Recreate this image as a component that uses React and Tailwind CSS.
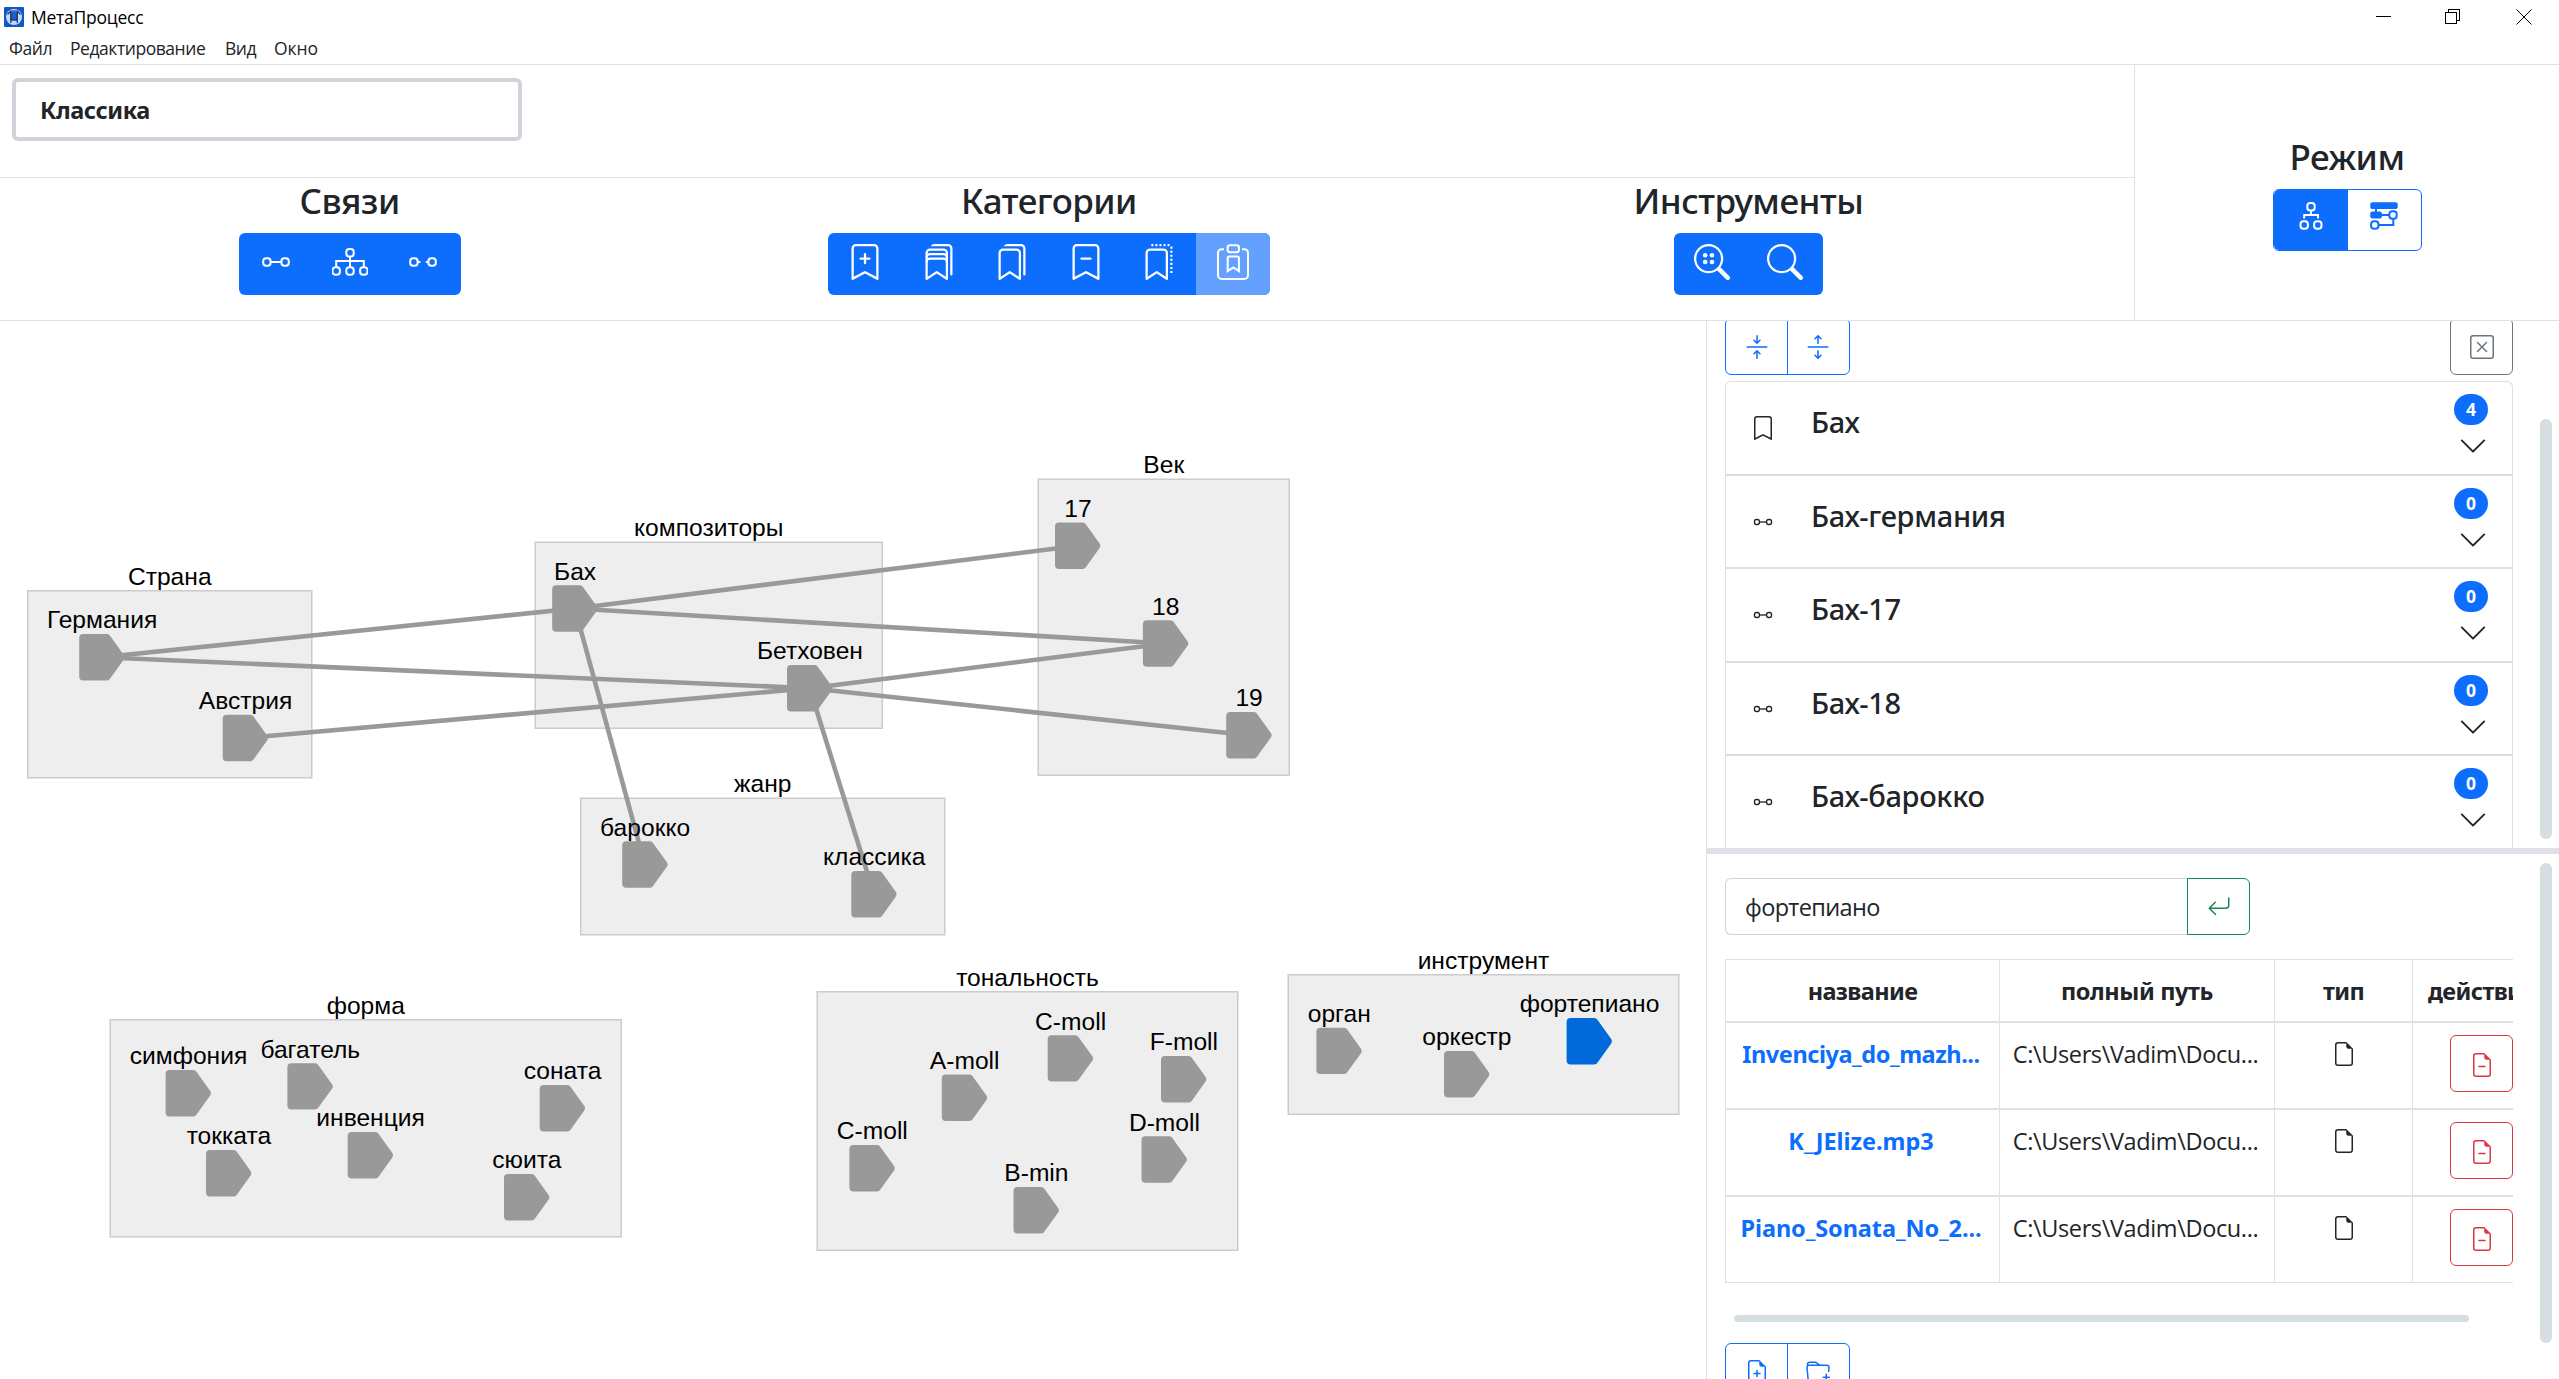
import React from "react";
import {
  BsBookmark,
  BsBookmarkPlus,
  BsBookmarkDash,
  BsBookmarks,
  BsSearch,
  BsArrowsCollapse,
  BsArrowsExpand,
  BsXSquare,
  BsChevronDown,
  BsArrowReturnLeft,
  BsFileEarmark,
  BsFileEarmarkMinus,
  BsFileEarmarkPlus,
  BsFolderPlus,
} from "react-icons/bs";

/* ---------- icons ---------- */

const Node = ({ x, y }) => <rect x={x - 3.7} y={y - 3.7} width="7.4" height="7.4" rx="3" />;

const StrokeIcon = ({ className = "size-9", children }) => (
  <svg viewBox="0 0 36 36" className={className} fill="none" stroke="currentColor" strokeWidth="2">
    {children}
  </svg>
);

const LinkIcon = ({ className }) => (
  <StrokeIcon className={className}>
    <Node x={8.9} y={18} />
    <Node x={27.1} y={18} />
    <path d="M12.6 18h10.8" />
  </StrokeIcon>
);

const UnlinkIcon = () => (
  <StrokeIcon>
    <Node x={8.9} y={18} />
    <Node x={27.1} y={18} />
    <path d="M12.6 18h2.8M20.8 18h2.6" />
  </StrokeIcon>
);

const TreeIcon = () => (
  <StrokeIcon>
    <Node x={18} y={8.8} />
    <Node x={4.2} y={27} />
    <Node x={18} y={27} />
    <Node x={31.8} y={27} />
    <path d="M18 12.5v10.8M4.2 23.3V17h27.6v6.3" />
  </StrokeIcon>
);

const ForkIcon = () => (
  <StrokeIcon>
    <Node x={18} y={8.8} />
    <Node x={11.2} y={27} />
    <Node x={24.8} y={27} />
    <path d="M18 12.5V17M11.2 20.5V17h13.8v3.5" />
  </StrokeIcon>
);

const FlowIcon = () => (
  <StrokeIcon>
    <rect x="4.3" y="4.3" width="27.4" height="6.8" rx="2" fill="currentColor" stroke="none" />
    <rect x="4.3" y="13.6" width="11.6" height="6.8" rx="2" fill="currentColor" stroke="none" />
    <Node x={27} y={17} />
    <Node x={8.8} y={27} />
    <path d="M10 11v3M15.8 17h7.4M12.6 27h14.7v-6.3" />
  </StrokeIcon>
);

const FRONT_BOOKMARK =
  "M2 4a2 2 0 0 1 2-2h6a2 2 0 0 1 2 2v11.5a.5.5 0 0 1-.777.416L7 13.101l-4.223 2.815A.5.5 0 0 1 2 15.5zm2-1a1 1 0 0 0-1 1v10.566l3.723-2.482a.5.5 0 0 1 .554 0L11 14.566V4a1 1 0 0 0-1-1z";

const BookmarkStackIcon = () => (
  <svg viewBox="0 0 16 16" className="size-9" fill="currentColor">
    <path d={FRONT_BOOKMARK} />
    <path d="M4.268 1H12a1 1 0 0 1 1 1v11.768l.223.148A.5.5 0 0 0 14 13.5V2a2 2 0 0 0-2-2H6a2 2 0 0 0-1.732 1" />
    <path
      d="M2.5 6A1.5 1.5 0 0 1 4 4.5h6A1.5 1.5 0 0 1 11.5 6M2.5 8A1.5 1.5 0 0 1 4 6.5h6A1.5 1.5 0 0 1 11.5 8"
      fill="none"
      stroke="currentColor"
      strokeWidth="0.9"
    />
  </svg>
);

const BookmarkDashedIcon = () => (
  <svg viewBox="0 0 16 16" className="size-9" fill="currentColor">
    <path d={FRONT_BOOKMARK} />
    <path d="M4.6.5H12.5a1 1 0 0 1 1 1V13.5" fill="none" stroke="currentColor" strokeWidth="1" strokeDasharray="0.9 0.9" />
  </svg>
);

const ClipboardBookmarkIcon = () => (
  <StrokeIcon>
    <path d="M9 5.2H6.8A3.8 3.8 0 0 0 3 9v22.2A3.8 3.8 0 0 0 6.8 35h22.4A3.8 3.8 0 0 0 33 31.2V9a3.8 3.8 0 0 0-3.8-3.8H27" />
    <rect x="12.6" y="1.2" width="11.4" height="7" rx="2.4" />
    <path d="M12.7 27.2V14a1.6 1.6 0 0 1 1.6-1.6h8a1.6 1.6 0 0 1 1.6 1.6v13.2l-5.6-3.8z" />
  </StrokeIcon>
);

const SearchDotsIcon = () => (
  <span className="relative block size-9">
    <BsSearch className="size-9" />
    <svg viewBox="0 0 36 36" className="absolute inset-0 size-9" fill="currentColor">
      <circle cx="11.2" cy="11.2" r="2.3" />
      <circle cx="18" cy="11.2" r="2.3" />
      <circle cx="11.2" cy="18" r="2.3" />
      <circle cx="18" cy="18" r="2.3" />
    </svg>
  </span>
);

const AppIcon = () => (
  <svg viewBox="0 0 20 20" className="size-5">
    <rect width="20" height="20" rx="1" fill="#0f57cf" />
    <circle cx="10" cy="10" r="8" fill="#c5dcf5" />
    <path d="M6.2 4.5h7.6v9H6.2z" fill="#1b5fd0" />
    <path d="M3.5 7.5 6.5 4h7l3 3.5M6.8 5v11M13.2 5v11M6.8 13h6.4" fill="none" stroke="#16345f" strokeWidth="1.2" />
  </svg>
);

/* ---------- header ---------- */

const TitleBar = () => (
  <div className="flex h-[65px] flex-col border-b border-[#dee2e6] font-['Open_Sans',sans-serif] text-[17.5px] text-black">
    <div className="flex h-[34px] items-center justify-between pl-1">
      <div className="flex items-center gap-[7px]">
        <AppIcon />
        <span className="tracking-[-0.25px]">МетаПроцесс</span>
      </div>
      <svg viewBox="0 0 156 16" className="mr-[27px] h-4 w-[156px]" fill="none" stroke="#000" shapeRendering="crispEdges">
        <path d="M0 7.5h15M69.5 3.5h11v11h-11zM72.5 3V.5h11v11H81" />
        <path d="M140.5.5l15 15M155.5.5l-15 15" shapeRendering="auto" />
      </svg>
    </div>
    <div className="flex h-[30px] items-center pb-px pl-[9px] tracking-[-0.45px] text-[#212529]">
      <span className="w-[61px]">Файл</span>
      <span className="w-[155px]">Редактирование</span>
      <span className="w-[49px]">Вид</span>
      <span className="tracking-[-0.1px]">Окно</span>
    </div>
  </div>
);

const Heading = ({ children }) => (
  <h4 className="h-[46px] font-['Noto_Sans',sans-serif] text-[35px] leading-[46px] font-medium tracking-[-0.5px]">{children}</h4>
);

const ToolGroup = ({ title, icons, disabledLast }) => (
  <div className="flex flex-col items-center">
    <Heading>{title}</Heading>
    <div
      className={
        disabledLast
          ? "mt-[9px] flex h-[62px] overflow-hidden rounded-[6px] bg-[#0d6efd] text-white"
          : "mt-[9px] flex h-[62px] overflow-hidden rounded-[6px] bg-[#0d6efd] px-[0.7px] text-white"
      }
    >
      {icons.map((icon, i) => (
        <button
          key={i}
          className={
            disabledLast && i === icons.length - 1
              ? "flex w-[73.6px] justify-center bg-[#64a1ff] pt-[11px]"
              : "flex w-[73.6px] justify-center pt-[11px]"
          }
        >
          {icon}
        </button>
      ))}
    </div>
  </div>
);

const big = "size-9";

const Header = () => (
  <header className="flex h-64 border-b border-[#dee2e6]">
    <div className="flex w-[2135px] flex-col border-r border-[#dee2e6]">
      <div className="h-[113px] border-b border-[#dee2e6] pt-[13px] pl-3">
        <div className="flex h-[63px] w-[510px] items-center rounded-[6px] border-4 border-[#ced4da] pt-[2px] pl-[24px] font-['Noto_Sans',sans-serif] text-[23.5px] font-bold tracking-[-0.4px]">
          Классика
        </div>
      </div>
      <div className="grid w-[2098px] grid-cols-3">
        <ToolGroup title="Связи" icons={[<LinkIcon className={big} />, <TreeIcon />, <UnlinkIcon />]} />
        <ToolGroup
          title="Категории"
          disabledLast
          icons={[
            <BsBookmarkPlus className={big} />,
            <BookmarkStackIcon />,
            <BsBookmarks className={big} />,
            <BsBookmarkDash className={big} />,
            <BookmarkDashedIcon />,
            <ClipboardBookmarkIcon />,
          ]}
        />
        <ToolGroup title="Инструменты" icons={[<SearchDotsIcon />, <BsSearch className={big} />]} />
      </div>
    </div>
    <div className="flex grow flex-col items-center pt-[69px]">
      <Heading>Режим</Heading>
      <div className="mt-[9px] flex h-[62px] overflow-hidden rounded-[6px] border border-[#0d6efd]">
        <button className="flex w-[74px] justify-center bg-[#0d6efd] pt-[8px] text-white">
          <ForkIcon />
        </button>
        <button className="flex w-[73px] justify-center pt-[8px] text-[#0d6efd]">
          <FlowIcon />
        </button>
      </div>
    </div>
  </header>
);

/* ---------- graph ---------- */

const groups = [
  { t: "Страна", x: 27, y: 590, w: 285.5, h: 188.5 },
  { t: "композиторы", x: 534.5, y: 541.5, w: 348.5, h: 187.5 },
  { t: "Век", x: 1037.5, y: 478.5, w: 252.5, h: 297.5 },
  { t: "жанр", x: 580, y: 797.5, w: 365.5, h: 138 },
  { t: "форма", x: 109.5, y: 1019, w: 512.5, h: 218.5 },
  { t: "тональность", x: 816.5, y: 991, w: 422, h: 260 },
  { t: "инструмент", x: 1287.5, y: 974, w: 392, h: 141 },
];

const nodes = [
  { id: "de", t: "Германия", x: 79.2, y: 634 },
  { id: "at", t: "Австрия", x: 222.7, y: 714.8 },
  { id: "bach", t: "Бах", x: 552.2, y: 585.3 },
  { id: "beet", t: "Бетховен", x: 787, y: 665 },
  { id: "bar", t: "барокко", x: 622.2, y: 841.3 },
  { id: "cls", t: "классика", x: 851.3, y: 871 },
  { id: "c17", t: "17", x: 1055, y: 522.6 },
  { id: "c18", t: "18", x: 1142.9, y: 620.3 },
  { id: "c19", t: "19", x: 1226.2, y: 712.1 },
  { id: "sym", t: "симфония", x: 165.6, y: 1070 },
  { id: "bag", t: "багатель", x: 287.4, y: 1063.2 },
  { id: "inv", t: "инвенция", x: 347.7, y: 1132 },
  { id: "tok", t: "токката", x: 206, y: 1150 },
  { id: "son", t: "соната", x: 539.7, y: 1085 },
  { id: "sui", t: "сюита", x: 504, y: 1174 },
  { id: "cm1", t: "C-moll", x: 849.4, y: 1145 },
  { id: "am", t: "A-moll", x: 941.8, y: 1074.6 },
  { id: "cm2", t: "C-moll", x: 1047.7, y: 1035.2 },
  { id: "fm", t: "F-moll", x: 1161, y: 1056 },
  { id: "dm", t: "D-moll", x: 1141.5, y: 1136.3 },
  { id: "bm", t: "B-min", x: 1013.5, y: 1187 },
  { id: "org", t: "орган", x: 1316.4, y: 1027.7 },
  { id: "ork", t: "оркестр", x: 1444, y: 1051 },
  { id: "pf", t: "фортепиано", x: 1566.6, y: 1018, active: true },
];

const edges = [
  ["de", "bach"],
  ["de", "beet"],
  ["at", "beet"],
  ["bach", "c17"],
  ["bach", "c18"],
  ["bach", "bar"],
  ["beet", "c18"],
  ["beet", "c19"],
  ["beet", "cls"],
];

const byId = Object.fromEntries(nodes.map((n) => [n.id, n]));

const Graph = () => (
  <svg viewBox="0 321 1706 1058" className="h-full w-[1706px] shrink-0 font-['Liberation_Sans',Arial,sans-serif] text-[24.6px]">
    {groups.map((g) => (
      <rect key={g.t} x={g.x + 0.75} y={g.y + 0.75} width={g.w - 1.5} height={g.h - 1.5} fill="#eeeeee" stroke="#cccccc" strokeWidth="1.5" />
    ))}
    {edges.map(([a, b]) => (
      <line
        key={a + b}
        x1={byId[a].x + 22.7}
        y1={byId[a].y + 23.2}
        x2={byId[b].x + 22.7}
        y2={byId[b].y + 23.2}
        stroke="#999999"
        strokeWidth="4.6"
      />
    ))}
    {nodes.map((n) => (
      <path
        key={n.id}
        transform={`translate(${n.x} ${n.y})`}
        d="M4 0H27.5Q30 0 31 2L44.8 21.2Q46 23.2 44.8 25.2L31 44.4Q30 46.4 27.5 46.4H4Q0 46.4 0 42.4V4Q0 0 4 0Z"
        fill={n.active ? "#0169d9" : "#999999"}
      />
    ))}
    {groups.map((g) => (
      <text key={g.t} x={g.x + g.w / 2} y={g.y - 5.5} textAnchor="middle">
        {g.t}
      </text>
    ))}
    {nodes.map((n) => (
      <text key={n.id} x={n.x + 22.9} y={n.y - 5.7} textAnchor="middle">
        {n.t}
      </text>
    ))}
  </svg>
);

/* ---------- side panel ---------- */

const OutlinePair = ({ left, right }) => (
  <div className="flex h-[57px] w-[125px] rounded-[6px] border border-[#0d6efd] text-[#0d6efd]">
    <button className="flex w-[62px] justify-center border-r border-[#0d6efd] pt-4">{left}</button>
    <button className="flex grow justify-center pt-4 pr-px">{right}</button>
  </div>
);

const items = [
  { title: "Бах", count: 4, bookmark: true },
  { title: "Бах-германия", count: 0 },
  { title: "Бах-17", count: 0 },
  { title: "Бах-18", count: 0 },
  { title: "Бах-барокко", count: 0 },
];

const Accordion = () => (
  <div className="mt-[6px] w-[788px] rounded-t-[6px] border border-b-0 border-[#dfdfdf]">
    {items.map((it, i) => (
      <div key={i} className="flex h-[93.5px] border-b-2 border-[#dcdee0] pl-[25px] pr-[24px]">
        <div className="w-[60px] pt-[34px]">
          {it.bookmark ? <BsBookmark className="size-6" /> : <LinkIcon className="size-6" />}
        </div>
        <h5 className="grow pt-[20px] font-['Noto_Sans',sans-serif] text-[29px] leading-[40px] font-medium tracking-[-0.3px]">{it.title}</h5>
        <div className="flex flex-col items-center pt-[12px]">
          <span className="flex h-[31px] w-[34px] items-center justify-center rounded-full bg-[#0d6efd] font-['Noto_Sans',sans-serif] text-[17.5px] font-bold text-white">
            {it.count}
          </span>
          <BsChevronDown className="mt-[6px] -mr-[4px] size-[30px]" />
        </div>
      </div>
    ))}
  </div>
);

const files = [
  { name: "Invenciya_do_mazh...", cls: "tracking-[-0.45px]" },
  { name: "K_JElize.mp3", cls: "tracking-[-0.05px]" },
  { name: "Piano_Sonata_No_2...", cls: "tracking-[-0.1px]" },
];

const FileTable = () => (
  <div className="mt-[24px] w-[788px] overflow-hidden border-t border-l border-[#dee2e6]">
    <div className="grid w-[840px] grid-cols-[274px_275px_138px_153px]">
      <div className="col-span-4 grid h-[63px] grid-cols-subgrid border-b-2 border-[#dee2e6] text-center font-['Noto_Sans',sans-serif] text-[23.5px] leading-[62px] font-bold tracking-[-0.6px]">
        <div className="border-r border-[#dee2e6]">название</div>
        <div className="border-r border-[#dee2e6] tracking-[-0.4px]">полный путь</div>
        <div className="border-r border-[#dee2e6]">тип</div>
        <div className="pl-[15px] text-left">действия</div>
      </div>
      {files.map((f, i) => (
        <div key={f.name} className="col-span-4 grid h-[87px] grid-cols-subgrid border-b-2 border-[#dee2e6] text-center text-[23.5px] leading-[32px] last:h-[86px] last:border-b">
          <div className="border-r border-[#dee2e6] pt-[15px] pr-[3px] font-['Noto_Sans',sans-serif] font-bold text-[#0d6efd]">
            <span className={f.cls}>{f.name}</span>
          </div>
          <div className="border-r border-[#dee2e6] pt-[15px] pr-[3px] font-['Open_Sans',sans-serif] tracking-[-0.37px]">
            {"C:\\Users\\Vadim\\Docu..."}
          </div>
          <div className="flex justify-center border-r border-[#dee2e6] pt-[19px]">
            <BsFileEarmark className="size-6" />
          </div>
          <div className="pt-[12px] pl-[37px]">
            <button className="flex h-[57px] w-[63px] justify-center rounded-[6px] border border-[#dc3545] pt-[17px] text-[#dc3545]">
              <BsFileEarmarkMinus className="size-6" />
            </button>
          </div>
        </div>
      ))}
    </div>
  </div>
);

const SidePanel = () => (
  <aside className="flex grow flex-col border-l border-[#dee2e6]">
    <section className="flex h-[527px] justify-between overflow-hidden pr-[7px] pl-[18px]">
      <div className="-mt-[3px]">
        <div className="flex w-[788px] justify-between">
          <OutlinePair left={<BsArrowsCollapse className="size-6" />} right={<BsArrowsExpand className="size-6" />} />
          <button className="flex h-[57px] w-[63px] justify-center rounded-[6px] border border-[#6c757d] pt-4 text-[#6c757d]">
            <BsXSquare className="size-6" />
          </button>
        </div>
        <Accordion />
      </div>
      <div className="mt-[98px] h-[420px] w-3 rounded-full bg-[#d6dee1]" />
    </section>
    <div className="h-[6px] bg-[#dee2e6]" />
    <section className="flex h-[525px] justify-between overflow-hidden pr-[7px] pl-[18px]">
      <div className="pt-6">
        <div className="flex h-[57px] w-[525px]">
          <div className="grow rounded-l-[6px] border border-r-0 border-[#ced4da] pl-[19px] font-['Open_Sans',sans-serif] text-[23.5px] leading-[57px] tracking-[-0.65px]">
            фортепиано
          </div>
          <button className="flex w-[63px] justify-center rounded-r-[6px] border border-[#198754] pt-4 text-[#198754]">
            <BsArrowReturnLeft className="size-6" />
          </button>
        </div>
        <FileTable />
        <div className="mt-[32px] ml-[9px] h-[7px] w-[735px] rounded-full bg-[#d6dee1]" />
        <div className="mt-[21px]">
          <OutlinePair left={<BsFileEarmarkPlus className="size-6" />} right={<BsFolderPlus className="size-6" />} />
        </div>
      </div>
      <div className="mt-[9px] h-[480px] w-3 rounded-full bg-[#d6dee1]" />
    </section>
  </aside>
);

export default function App() {
  return (
    <div className="flex h-[1379px] w-[2559px] flex-col overflow-hidden bg-white text-[#212529]">
      <TitleBar />
      <Header />
      <main className="flex h-[1058px]">
        <Graph />
        <SidePanel />
      </main>
    </div>
  );
}
